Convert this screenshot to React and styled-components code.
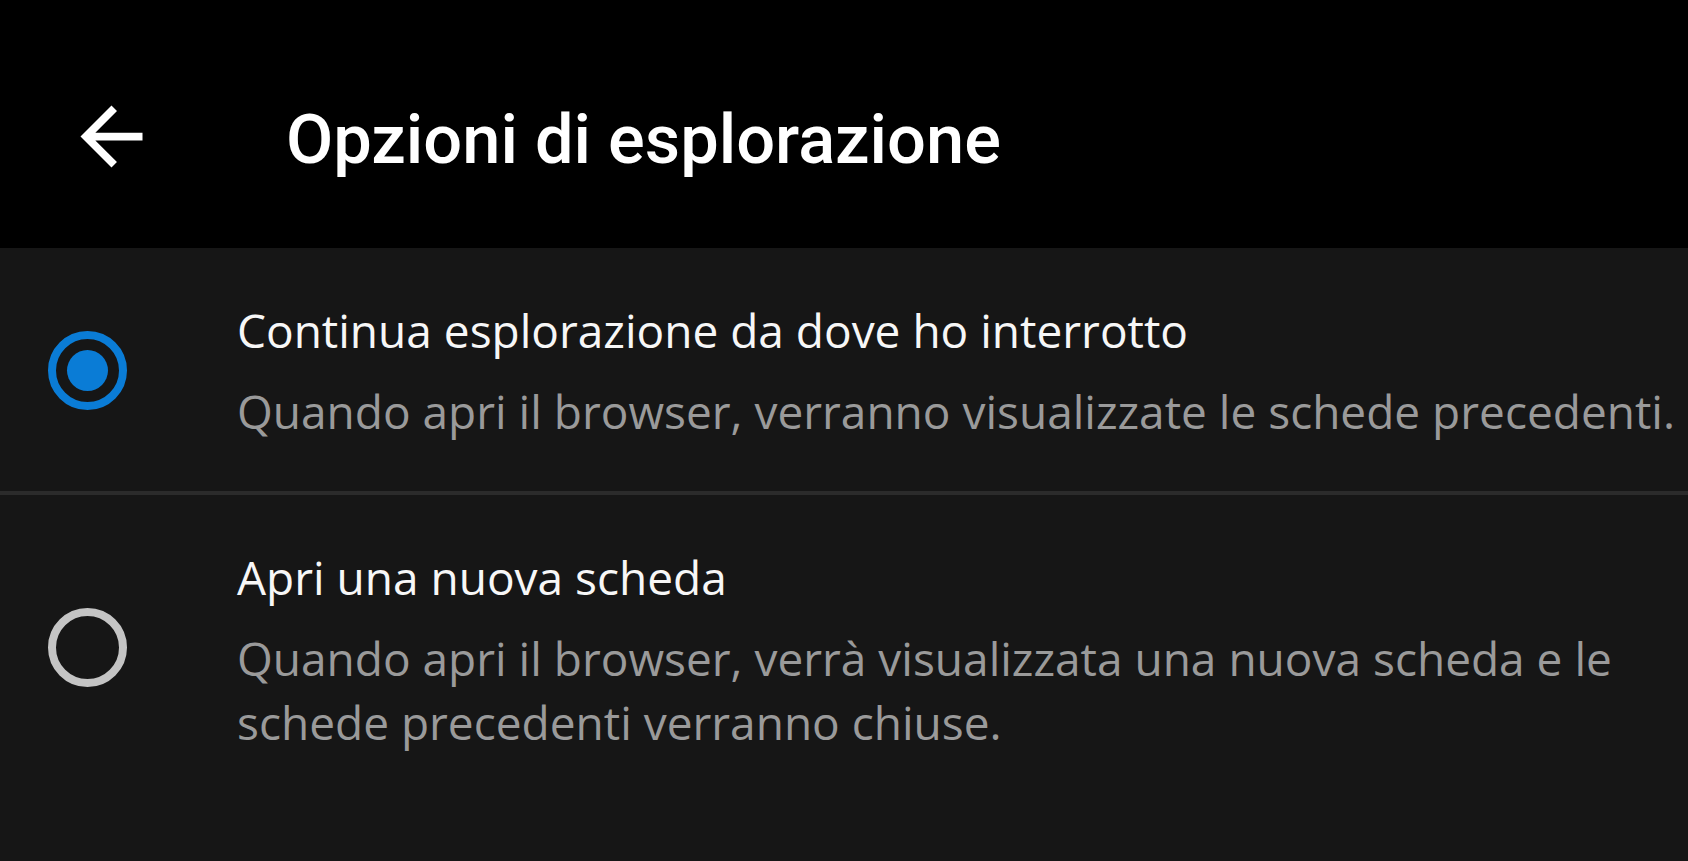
import React from "react";
import styled, { createGlobalStyle } from "styled-components";

const Global = createGlobalStyle`
  html, body { margin: 0; padding: 0; background: #161616; }
  body { width: 1688px; height: 861px; overflow: hidden; }
  * { box-sizing: border-box; }
`;

const Screen = styled.div`
  width: 1688px;
  height: 861px;
  background: #161616;
  display: flex;
  flex-direction: column;
`;

const Header = styled.header`
  height: 248px;
  flex: none;
  background: #000;
  display: flex;
  align-items: flex-start;
  padding: 0 0 0 65px;
`;

const BackButton = styled.button`
  width: 93px;
  height: 93px;
  margin-top: 90px;
  padding: 0;
  border: 0;
  background: transparent;
  color: #fff;
  display: flex;
  align-items: center;
  justify-content: center;
  cursor: pointer;
  svg { width: 93px; height: 93px; display: block; }
`;

const Title = styled.h1`
  margin: 106px 0 0 128px;
  font-family: Roboto, "Liberation Sans", sans-serif;
  font-weight: 500;
  font-size: 68.6px;
  line-height: 1;
  color: #fff;
`;

const List = styled.div`
  display: flex;
  flex-direction: column;
`;

const Option = styled.label`
  display: flex;
  align-items: center;
  gap: 110px;
  padding: 50px 0 48px 48px;
  border-bottom: ${(p) => (p.$divider ? "4px solid #2b2b2b" : "none")};
  cursor: pointer;
`;

const Radio = styled.span`
  flex: none;
  width: 79px;
  height: 79px;
  margin-top: ${(p) => (p.$checked ? "0" : "-5px")};
  border-radius: 50%;
  border: 8px solid ${(p) => (p.$checked ? "#0a7cd6" : "#c4c4c4")};
  display: flex;
  align-items: center;
  justify-content: center;
  &::after {
    content: "";
    width: 41px;
    height: 41px;
    border-radius: 50%;
    background: #0a7cd6;
    display: ${(p) => (p.$checked ? "block" : "none")};
  }
`;

const Texts = styled.div`
  display: flex;
  flex-direction: column;
  gap: 17px;
  max-width: 1450px;
  font-family: "Open Sans", "Noto Sans", sans-serif;
  font-size: 46px;
  line-height: 64px;
  letter-spacing: 0;
`;

const OptionTitle = styled.div`
  color: #f7f7f7;
`;

const OptionDesc = styled.div`
  color: #9a9a9a;
`;

const options = [
  {
    title: "Continua esplorazione da dove ho interrotto",
    desc: "Quando apri il browser, verranno visualizzate le schede precedenti.",
    checked: true,
  },
  {
    title: "Apri una nuova scheda",
    desc: "Quando apri il browser, verrà visualizzata una nuova scheda e le schede precedenti verranno chiuse.",
    checked: false,
  },
];

export default function App() {
  return (
    <Screen>
      <Global />
      <Header>
        <BackButton aria-label="Indietro">
          <svg viewBox="0 0 24 24" fill="currentColor">
            <path d="M20 11H7.83l5.59-5.59L12 4l-8 8 8 8 1.41-1.41L7.83 13H20v-2z" />
          </svg>
        </BackButton>
        <Title>Opzioni di esplorazione</Title>
      </Header>
      <List>
        {options.map((o, i) => (
          <Option key={i} $divider={i < options.length - 1}>
            <Radio $checked={o.checked} />
            <Texts>
              <OptionTitle>{o.title}</OptionTitle>
              <OptionDesc>{o.desc}</OptionDesc>
            </Texts>
          </Option>
        ))}
      </List>
    </Screen>
  );
}
